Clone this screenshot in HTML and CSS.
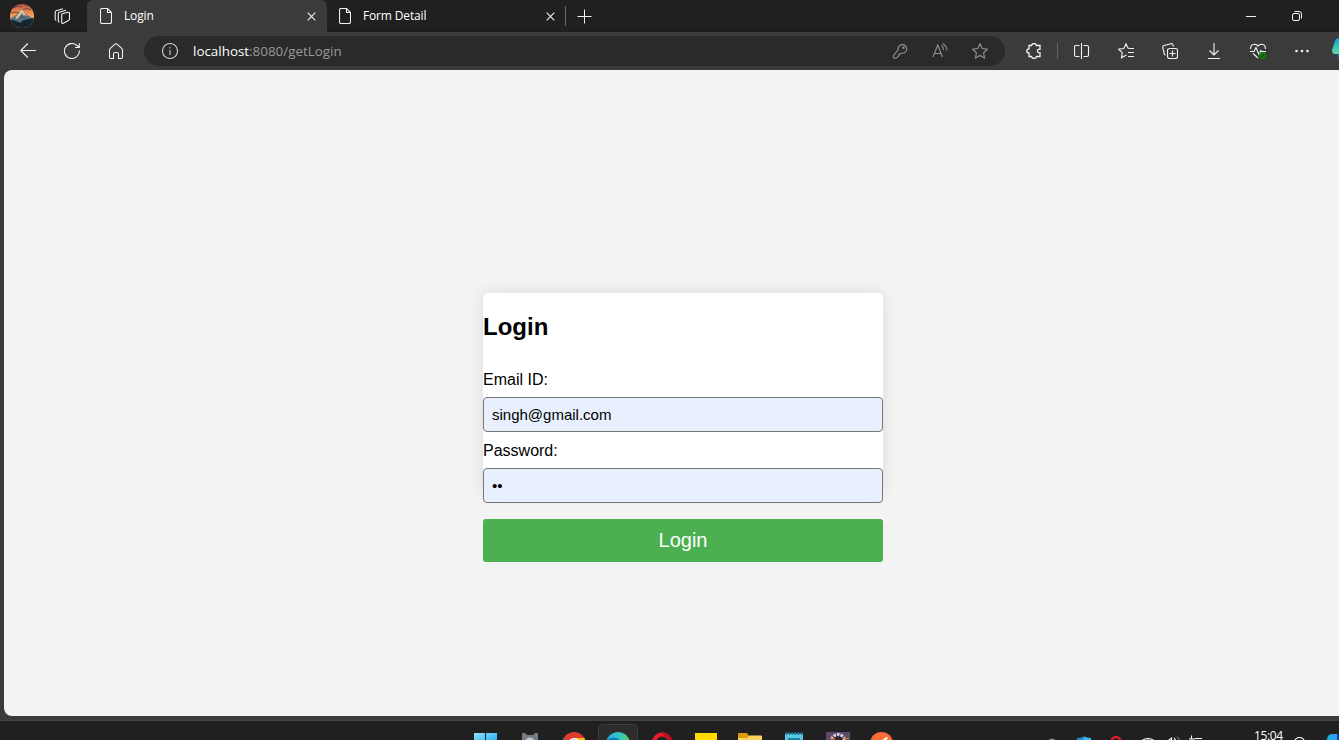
FILE: index.html
```html
<!DOCTYPE html>
<html lang="en">
<head>
<meta charset="utf-8">
<title>Login</title>
<link rel="stylesheet" href="styles.css">
</head>
<body>
<div class="window">
  <header class="tabstrip">
    <svg class="avatar" viewBox="0 0 24 24">
      <defs>
        <clipPath id="disc"><circle cx="12" cy="12" r="12"/></clipPath>
        <linearGradient id="sky" x1="0" y1="0" x2="0" y2="1"><stop offset="0" stop-color="#a8524b"/><stop offset=".3" stop-color="#ef8748"/><stop offset=".55" stop-color="#f2a25c"/></linearGradient>
      </defs>
      <g clip-path="url(#disc)">
        <path d="M0 0h24v24H0z" fill="url(#sky)"/>
        <path d="M3 4q5-3 9-1M12 6q5-3 9 0M1 9q4-2 8 0" stroke="#71404b" fill="none"/>
        <path d="M0 15 6 11 12 5l5 6 7 4v9H0z" fill="#51717f"/>
        <path d="m12 5 5 7-3-1-1 3-2-3-4 4-2-1z" fill="#e0bd9b"/>
        <path d="m12 9 3 6-5-2z" fill="#426275"/>
        <path d="M0 16q6 0 10 3l4-3 10-2v10H0z" fill="#14252e"/>
      </g>
    </svg>
    <svg class="icon workspaces" viewBox="0 0 16 16"><path d="M8.200 5.800 13.800 4.300q1.700-.3 1.700 1.200V11q0 1-1 1.400l-5.200 2.900q-1.600.6-1.600-1V7.200q0-1 .5-1.400M4.300 13.500V5.700q0-1 1-1.400L12 2.300M1.200 11.500V4.200q0-1 1-1.400L9 .8M4.300 13.500l1.200.8M1.200 11.500l1 .7"/></svg>
    <div class="tab active">
      <svg class="doc" viewBox="0 0 12 16"><path d="M2 .5h5.500l4 4V14q0 1.500-1.500 1.500H2Q.5 15.500.5 14V2Q.5.500 2 .500M7.500.5V4.500h4"/></svg>
      <span class="tab-title">Login</span>
      <svg class="close" viewBox="0 0 9 9"><path d="m.7.7 7.600 7.600m0-7.600L.7 8.300"/></svg>
    </div>
    <div class="tab">
      <svg class="doc" viewBox="0 0 12 16"><path d="M2 .5h5.500l4 4V14q0 1.500-1.500 1.500H2Q.5 15.500.5 14V2Q.5.500 2 .500M7.500.5V4.500h4"/></svg>
      <span class="tab-title">Form Detail</span>
      <svg class="close" viewBox="0 0 9 9"><path d="m.7.7 7.600 7.600m0-7.600L.7 8.300"/></svg>
    </div>
    <span class="tab-rule"></span>
    <svg class="new-tab" viewBox="0 0 15 15"><path d="M7.500.5v14M.5 7.500h14"/></svg>
    <div class="controls">
      <svg viewBox="0 0 10 10"><path d="M0 5.500h10"/></svg>
      <svg viewBox="0 0 10 10"><rect x=".5" y="2.500" width="7" height="7" rx="1.500"/><path d="M2.500.500H7Q9.500.500 9.500 3V7.500"/></svg>
      <svg viewBox="0 0 10 10"><path d="m.5.5 9 9m0-9-9 9"/></svg>
    </div>
  </header>

  <nav class="toolbar">
    <div class="nav-buttons">
      <svg class="icon" viewBox="0 0 16 16"><path d="M16 7.500H.8M7.800.5l-7 7 7 7"/></svg>
      <svg class="icon" viewBox="0 0 16 16"><path d="M15.400 7.500A7.500 7.500 0 1 1 13 2.500l2 2M15.300.3V4.500H11"/></svg>
      <svg class="icon" viewBox="0 0 16 16"><path d="M1.500 7Q1.500 6 2.300 5.300L7 1.200q1-.8 2 0l4.700 4.100q.8.700.8 1.700v7q0 1.500-1.500 1.500h-2.500V11Q10.500 9.500 9 9.500H7Q5.500 9.500 5.500 11v4.500H3Q1.500 15.500 1.500 14z"/></svg>
    </div>
    <div class="address">
      <svg class="icon" viewBox="0 0 16 16"><circle cx="8" cy="8" r="7.500"/><path d="M8 7v5M8 4v1.500"/></svg>
      <span class="url"><b>localhost</b>:8080/getLogin</span>
      <div class="address-actions">
        <svg class="icon" viewBox="0 0 16 16"><path d="M6.200 6.800a4.300 4.300 0 1 1 3.300 3.300L8.200 11H7v1.500L4.700 14.800q-1.200.7-2.700.2-1-.8-.5-2.500z"/><circle cx="11.500" cy="4.700" r=".7"/></svg>
        <svg class="icon" viewBox="0 0 16 16"><path d="M1 14 5.800 2 10.500 14M2.700 10.500H9M9.500 2.500q2 1.500 2 4.500M10.500.500q4.500 2.500 4.500 7"/></svg>
        <svg class="icon" viewBox="0 0 16 16"><path d="m8 .8 2.200 4.700 5.200.7-3.800 3.600.9 5.200L8 12.500 3.500 15l.9-5.200L.6 6.200l5.200-.7z"/></svg>
      </div>
    </div>
    <svg class="icon extension" viewBox="0 0 16 16"><path d="M3 2.500H5.500Q6 .5 8 .5t2.500 2H14v3.800Q11.500 6 11.500 8t2.500 1.800v3.700h-3.500q-.5 2-2.500 2t-2.500-2H3V10Q.7 10 .7 8T3 5.800z"/></svg>
    <span class="bar-rule"></span>
    <div class="tools">
      <svg class="icon" viewBox="0 0 16 16"><path d="M5.500 2.500H2Q.5 2.500.5 4v8q0 1.500 1.500 1.500h3.500M9.500 2.500H13Q14.500 2.500 14.500 4v8q0 1.500-1.500 1.500H9.500M7.500 0v16"/></svg>
      <svg class="icon" viewBox="0 0 16 16"><path d="M8.500 12 3.500 14.800l.8-5.100L.6 6.200l5.200-.7L8 .8l2 4.200 1.500.5H16M10 9.500h6M10 13.500h6"/></svg>
      <svg class="icon" viewBox="0 0 16 16"><rect x="5.500" y="5.500" width="10" height="10" rx="2"/><path d="M10.500 7.500v6M7.500 10.500h6M3.500 12 2.500 11.500.7 4.500Q.5 3 2 2.500L9 .7q1.500-.2 2 1.300l.5 1.500"/></svg>
      <svg class="icon" viewBox="0 0 16 16"><path d="M8 0v12M3.500 7.500 8 12l4.500-4.500M2 15.500h12"/></svg>
      <svg class="icon" viewBox="0 0 16 16"><path d="M.6 6Q.3 1.500 4.500 1.200 7 1.200 8 3q1-1.800 3.500-1.800Q15.700 1.500 15.400 6M0 8.500h4l2-4 3 7 2-4 .8 1H16M3 10.500l5 4.500"/><circle cx="12.400" cy="12.700" r="3.600" class="ok"/><path d="m10.800 12.800 1 1 2-2" class="tick"/></svg>
      <svg class="icon dots" viewBox="0 0 16 16"><circle cx="2.500" cy="8" r="1.300"/><circle cx="8" cy="8" r="1.300"/><circle cx="13.500" cy="8" r="1.300"/></svg>
    </div>
    <svg class="copilot" viewBox="0 0 24 24">
      <defs><linearGradient id="cp" x1="0" y1="0" x2="0" y2="1"><stop offset="0" stop-color="#149ee0"/><stop offset=".6" stop-color="#39c8b8"/><stop offset="1" stop-color="#6dd49a"/></linearGradient></defs>
      <path d="M6 14h12v8H10q-3 0-4-4z" fill="#1260d0"/><path d="M1 13 4 4q1-3 4-3h8v16H4q-3 0-3-4" fill="url(#cp)"/>
    </svg>
  </nav>

  <main class="page">
    <form class="card">
      <h2>Login</h2>
      <label for="email">Email ID:</label>
      <input id="email" type="text" value="singh@gmail.com">
      <label for="password">Password:</label>
      <input id="password" type="password" value="12">
      <button type="button">Login</button>
    </form>
  </main>

  <footer class="taskbar">
    <div class="apps">
      <svg viewBox="0 0 24 24"><defs><linearGradient id="win" x2="1" y2="1"><stop stop-color="#8fe4ff"/><stop offset="1" stop-color="#1aa4ee"/></linearGradient></defs><path d="M0 1h11v11H0zM12 1h11v11H12z" fill="url(#win)"/></svg>
      <svg viewBox="0 0 24 24"><path d="M4 2q0-1 1-1h2l2 2h6l2-2h2q1 0 1 1v5l-1 6H5L4 7z" fill="#737d86"/><circle cx="12" cy="10" r="4.500" fill="#c3c9ce"/></svg>
      <svg viewBox="0 0 24 24"><circle cx="12" cy="12" r="12" fill="#dd3c2e"/><path d="M12 6h10.400L24 12 12 24z" fill="#fbc116"/><path d="M1.600 6 7 14l5 10Q0 23 0 12z" fill="#269b4b"/><circle cx="12" cy="12" r="6" fill="#fff"/><circle cx="12" cy="12" r="4.600" fill="#4285f4"/></svg>
      <span class="running"><svg viewBox="0 0 24 24"><defs><linearGradient id="edge"><stop stop-color="#27a9e0"/><stop offset=".6" stop-color="#30c9c0"/><stop offset="1" stop-color="#65d655"/></linearGradient></defs><circle cx="12" cy="12" r="12" fill="url(#edge)"/><path d="M1 8q5-4 12-1l2 4-3 8Q0 17 1 8" fill="#0877bd"/></svg></span>
      <svg viewBox="0 0 24 24"><ellipse cx="12" cy="12" rx="8.500" ry="9.500" fill="none" stroke="#ed1c2d" stroke-width="4"/><path d="M13 .5Q22 1 23 12l-4-1Q18 5 13 3z" fill="#b90e20"/></svg>
      <svg viewBox="0 0 24 24"><path d="M1 1h22v22H1z" fill="#ffd900"/></svg>
      <svg viewBox="0 0 24 24"><path d="M0 2q0-1 1-1h8l2 3v4H0z" fill="#dc9c08"/><path d="M0 6h9l2-2.500h12q1 0 1 1V22H0z" fill="#fbd15d"/></svg>
      <svg viewBox="0 0 24 24"><path d="M3 1.500h18v20H3z" fill="#59c7e8"/><path d="M6 6h12v2H6z" fill="#1682a4"/><path d="M4.500 0v3m3-3v3m3-3v3m3-3v3m3-3v3m3-3v3" stroke="#176f91" stroke-width="1.300"/></svg>
      <svg viewBox="0 0 24 24"><path d="M0 0h24v24H0z" fill="#5e4a70"/><circle cx="12" cy="9" r="6.500" fill="#302738" stroke="#d2d3d6" stroke-width="3" stroke-dasharray="2.600 1"/><path d="M4 6.500h5M16 6.500h7M5 8h4" stroke="#da7524"/></svg>
      <svg viewBox="0 0 24 24"><circle cx="11.500" cy="11.500" r="11.500" fill="#ff6c37"/><path d="m10 10 5-4 2-1 1 1-2 2z" fill="#fff"/></svg>
    </div>
    <div class="tray">
      <svg viewBox="0 0 16 16"><circle cx="8" cy="10.500" r="4" fill="#888"/></svg>
      <svg viewBox="0 0 16 16"><path d="M1 6q4 0 7-1.500 3 1.500 7 1.500v8H1z" fill="#238fd0"/><path d="M8 4.500q3 1.500 7 1.500v8H8z" fill="#42b8f3"/></svg>
      <svg viewBox="0 0 16 16"><circle cx="8" cy="9.500" r="4.500" fill="none" stroke="#e21a29" stroke-width="2.500"/></svg>
      <svg viewBox="0 0 16 16" class="line"><path d="M2 8.500q6-4 12 0M5 9q3-2 6 0"/></svg>
      <svg viewBox="0 0 16 16" class="line"><path d="M3 9.500 7.500 6v6M10 6q2 2 2 5"/><path d="M13 5q3 2 3 5" stroke="#777"/></svg>
      <svg viewBox="0 0 16 16" class="line"><path d="M3.500 3.500v3M1 7h5V10M7 6.500h7"/></svg>
      <span class="clock">15:04</span>
      <svg viewBox="0 0 16 16" class="line bell"><path d="M2.500 14v-4a5 4.500 0 0 1 10 0v4"/></svg>
      <svg viewBox="0 0 24 24" class="pilot"><path d="M0 11 3 3q1-2 4-2h7v13H0z" fill="#26a8e2"/><path d="M12 1h7l4 7v4H12z" fill="#1435c5"/><path d="M7 7h7l-2 6H5z" fill="#1969d7"/></svg>
    </div>
  </footer>
</div>
</body>
</html>
```
FILE: styles.css
```css
* { box-sizing: border-box; }
body { margin: 0; overflow: hidden; background: #3b3b3b; }
svg { display: block; flex: none; }
.window { width: 1339px; height: 740px; display: flex; flex-direction: column; overflow: hidden; font-family: "Open Sans", "Noto Sans", sans-serif; }

.icon, .doc, .close, .new-tab, .controls svg { fill: none; stroke: #f2f2f2; stroke-width: 1.1; }
.icon { width: 16px; height: 16px; }

.tabstrip { height: 32px; flex: none; display: flex; align-items: center; padding-left: 10px; background: linear-gradient(#202020 30px, #1a1a1a); overflow: hidden; }
.avatar { width: 24px; height: 24px; }
.workspaces { margin: 0 17px 0 20px; }
.tab { width: 239px; height: 32px; flex: none; display: flex; align-items: center; padding: 0 11px 0 12px; color: #fff; font-size: 12px; }
.tab.active { width: 240px; padding-left: 13px; background: #3b3b3b; border-radius: 6px 6px 0 0; }
.doc { width: 12px; height: 16px; margin-right: 12px; }
.tab-title { flex: 1; line-height: 32px; height: 32px; letter-spacing: -.15px; }
.close { width: 9px; height: 9px; }
.tab-rule { width: 1px; height: 20px; margin-left: -1px; background: #686868; flex: none; }
.new-tab { width: 15px; height: 15px; margin-left: 11px; stroke-width: 1; }
.controls { display: flex; flex: none; gap: 36px; margin-left: 654px; }
.controls svg { width: 10px; height: 10px; stroke-width: 1; }
.controls svg:last-child { margin-left: 1px; }

.toolbar { height: 38px; flex: none; display: flex; align-items: center; padding-left: 20px; background: #3b3b3b; overflow: hidden; }
.nav-buttons { display: flex; gap: 28px; margin-right: 20px; }
.address { width: 861px; height: 30px; flex: none; display: flex; align-items: center; padding: 0 17px 0 18px; border-radius: 15px; background: #2a2a2a; }
.address > .icon { stroke: #ccc; }
.url { flex: 1; margin-left: 15px; font-size: 13.4px; line-height: 28px; color: #999; }
.url b { font-weight: 400; color: #fff; }
.address-actions { display: flex; gap: 24px; }
.address-actions .icon { stroke: #929292; }
.extension { margin-left: 21px; stroke-width: 1.3; }
.bar-rule { width: 1px; height: 16px; margin: 0 16px 0 15px; background: #646464; flex: none; }
.tools { display: flex; gap: 28px; }
.ok { fill: #107c10; stroke: none; }
.tick { stroke: #063f06; }
.dots { fill: #f2f2f2; stroke: none; }
.copilot { width: 24px; height: 24px; margin: -4px 0 0 21px; }

.page { height: 646px; flex: none; margin-left: 4px; padding: 223px 0 0 479px; background: #f3f3f3; border-radius: 8px 0 0 8px; }
.card { width: 400px; height: 200px; display: flex; flex-direction: column; background: #fff; border-radius: 5px; box-shadow: 0 0 15px rgba(0, 0, 0, .1); font-family: "Liberation Sans", Arial, sans-serif; color: #000; }
.card h2 { margin: 20px 0 31px; font-size: 24px; line-height: 27px; flex: none; }
.card label { font-size: 16px; line-height: 18px; margin-bottom: 8px; flex: none; }
.card input { width: 400px; height: 35px; flex: none; margin: 0 0 10px; padding: 0 8px; border: 1px solid #767676; border-radius: 4px; background: #e8f0fe; color: #000; font: 15px "Liberation Sans", Arial, sans-serif; outline: none; }
.card button { height: 43px; flex: none; margin: 6px 0 0; padding: 0; border: 0; border-radius: 3px; background: #4caf50; color: #fff; font: 20px "Liberation Sans", Arial, sans-serif; }

.taskbar { height: 20px; flex: none; margin-top: 4px; display: flex; align-items: flex-start; padding-left: 474px; background: #202020; border-top: 1px solid #414141; overflow: hidden; }
.apps { display: flex; gap: 20px; padding-top: 11px; }
.apps svg { width: 24px; height: 24px; }
.running { flex: none; margin: -8px; padding: 7px; border: 1px solid #3c3c3c; border-radius: 4px; background: #2c2c2c; }
.tray { display: flex; padding-top: 11px; margin-left: 150px; }
.tray svg { width: 16px; height: 16px; margin-right: 16px; }
.tray svg:nth-child(4), .tray svg:nth-child(5) { margin-right: 8px; }
.line { fill: none; stroke: #fff; stroke-width: 1.1; }
.clock { width: 31px; margin: -4px 7px 0 34px; font-size: 12px; line-height: 15px; color: #fff; white-space: nowrap; letter-spacing: -.4px; }
.tray .bell { margin-right: 17px; }
.tray .pilot { width: 24px; height: 24px; margin: 1px 0 0; }
```
